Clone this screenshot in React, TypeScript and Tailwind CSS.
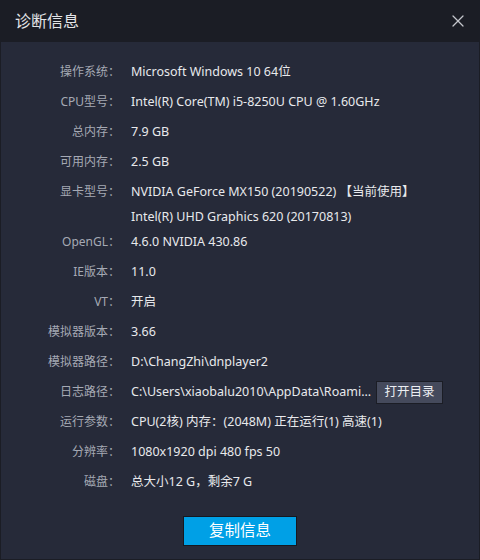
import { X } from 'lucide-react'

const font = { fontFamily: '"Noto Sans", "Noto Sans CJK SC", sans-serif' }

type Row = { label: string; value: string[]; button?: string }

const rows: Row[] = [
  { label: '操作系统：', value: ['Microsoft Windows 10 64位'] },
  { label: 'CPU型号：', value: ['Intel(R) Core(TM) i5-8250U CPU @ 1.60GHz'] },
  { label: '总内存：', value: ['7.9 GB'] },
  { label: '可用内存：', value: ['2.5 GB'] },
  {
    label: '显卡型号：',
    value: ['NVIDIA GeForce MX150 (20190522) 【当前使用】', 'Intel(R) UHD Graphics 620 (20170813)'],
  },
  { label: 'OpenGL：', value: ['4.6.0 NVIDIA 430.86'] },
  { label: 'IE版本：', value: ['11.0'] },
  { label: 'VT：', value: ['开启'] },
  { label: '模拟器版本：', value: ['3.66'] },
  { label: '模拟器路径：', value: ['D:\\ChangZhi\\dnplayer2'] },
  // path is shown already shortened, as in the client
  { label: '日志路径：', value: ['C:\\Users\\xiaobalu2010\\AppData\\Roami...'], button: '打开目录' },
  { label: '运行参数：', value: ['CPU(2核) 内存：(2048M) 正在运行(1) 高速(1)'] },
  { label: '分辨率：', value: ['1080x1920 dpi 480 fps 50'] },
  { label: '磁盘：', value: ['总大小12 G，剩余7 G'] },
]

export default function App() {
  return (
    <div className="w-[480px] h-[560px] flex flex-col bg-[#1b1d25] text-[12.5px]" style={font}>
      <div className="h-[42px] shrink-0 flex items-center justify-between pl-[15px] pr-[12px]">
        <span className="text-[16px] text-[#e4e5e8]">诊断信息</span>
        <X size={20} strokeWidth={1.5} className="text-[#c4c6cc]" />
      </div>
      <div className="flex-1 mx-px mb-px bg-[#262a39] flex flex-col pt-[15px]">
        {rows.map((r) => (
          <div key={r.label} className="flex">
            <div className="w-[119px] shrink-0 text-right text-[#a5a9b4] text-[12px] h-[30px] leading-[30px]">
              {r.label}
            </div>
            <div className="ml-[11px] flex flex-col text-[#e8e9ec]">
              {r.value.map((v, i) => (
                <div
                  key={v}
                  className={`flex items-center ${i === 0 ? 'h-[30px]' : 'h-[20px]'}`}
                >
                  <span className={r.button ? 'w-[240px] whitespace-nowrap' : 'whitespace-nowrap'}>{v}</span>
                  {r.button && (
                    <button className="ml-[5px] shrink-0 w-[67px] h-[23px] bg-[#454a5c] border border-[#1b1d25] text-[#eceef2] text-[12.5px]">
                      {r.button}
                    </button>
                  )}
                </div>
              ))}
            </div>
          </div>
        ))}
        <div className="flex justify-center mt-[19px]">
          <button className="w-[114px] h-[30px] bg-[#00a0e6] border border-[#161820] text-white text-[15.5px]">
            复制信息
          </button>
        </div>
      </div>
    </div>
  )
}
